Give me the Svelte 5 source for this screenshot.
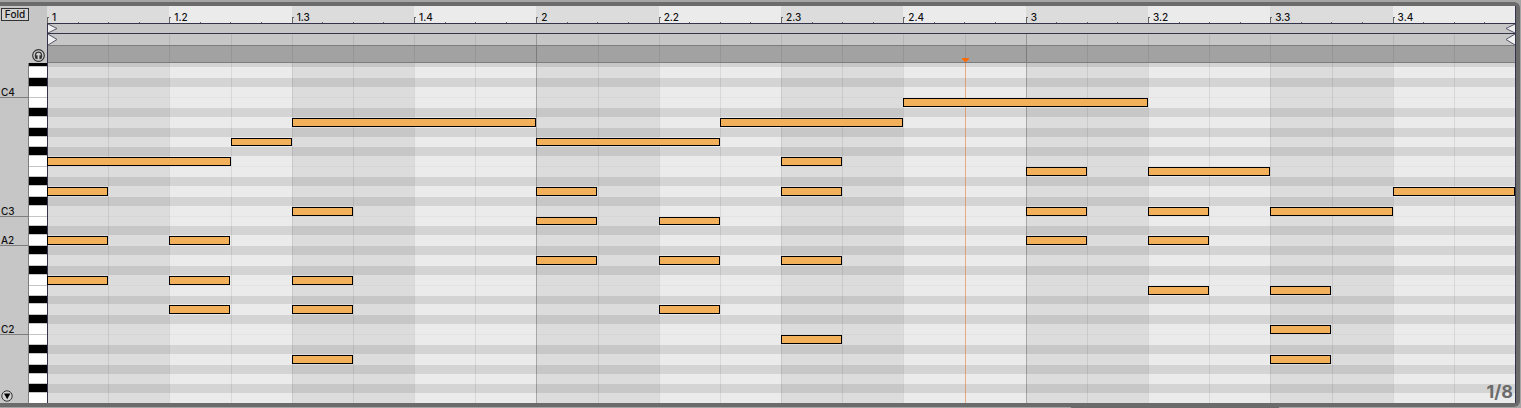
<script>
  const TOP_PITCH = 75; // D#4, only partly in view
  const BOTTOM_PITCH = 41; // F1
  const ROW = 9.875;
  const FIRST_ROW = 4.4;
  const BEATS = 12;

  let fold = $state(false);
  let preview = $state(false);
  let playhead = 7.5;

  const blackKeys = [1, 3, 6, 8, 10];
  const keyLabels = { 72: "C4", 60: "C3", 57: "A2", 48: "C2" };

  // start and length in beats
  const notes = [
    { pitch: 71, start: 7, length: 2 },
    { pitch: 69, start: 2, length: 2 },
    { pitch: 69, start: 5.5, length: 1.5 },
    { pitch: 67, start: 1.5, length: 0.5 },
    { pitch: 67, start: 4, length: 1.5 },
    { pitch: 65, start: 0, length: 1.5 },
    { pitch: 65, start: 6, length: 0.5 },
    { pitch: 64, start: 8, length: 0.5 },
    { pitch: 64, start: 9, length: 1 },
    { pitch: 62, start: 0, length: 0.5 },
    { pitch: 62, start: 4, length: 0.5 },
    { pitch: 62, start: 6, length: 0.5 },
    { pitch: 62, start: 11, length: 1 },
    { pitch: 60, start: 2, length: 0.5 },
    { pitch: 60, start: 8, length: 0.5 },
    { pitch: 60, start: 9, length: 0.5 },
    { pitch: 60, start: 10, length: 1 },
    { pitch: 59, start: 4, length: 0.5 },
    { pitch: 59, start: 5, length: 0.5 },
    { pitch: 57, start: 0, length: 0.5 },
    { pitch: 57, start: 1, length: 0.5 },
    { pitch: 57, start: 8, length: 0.5 },
    { pitch: 57, start: 9, length: 0.5 },
    { pitch: 55, start: 4, length: 0.5 },
    { pitch: 55, start: 5, length: 0.5 },
    { pitch: 55, start: 6, length: 0.5 },
    { pitch: 53, start: 0, length: 0.5 },
    { pitch: 53, start: 1, length: 0.5 },
    { pitch: 53, start: 2, length: 0.5 },
    { pitch: 52, start: 9, length: 0.5 },
    { pitch: 52, start: 10, length: 0.5 },
    { pitch: 50, start: 1, length: 0.5 },
    { pitch: 50, start: 2, length: 0.5 },
    { pitch: 50, start: 5, length: 0.5 },
    { pitch: 48, start: 10, length: 0.5 },
    { pitch: 47, start: 6, length: 0.5 },
    { pitch: 45, start: 2, length: 0.5 },
    { pitch: 45, start: 10, length: 0.5 }
  ];

  function rowTop(pitch) {
    return Math.max(0, Math.round(FIRST_ROW + (TOP_PITCH - 1 - pitch) * ROW));
  }

  function rowHeight(pitch) {
    return rowTop(pitch - 1) - rowTop(pitch);
  }

  const rows = [];
  for (let pitch = TOP_PITCH; pitch >= BOTTOM_PITCH; pitch--) {
    rows.push({
      pitch,
      black: blackKeys.includes(pitch % 12),
      afterWhite: pitch < TOP_PITCH && !blackKeys.includes((pitch + 1) % 12),
      height: rowHeight(pitch)
    });
  }

  const beats = Array.from({ length: BEATS }, (_, i) => {
    const bar = Math.floor(i / 4) + 1;
    const beat = (i % 4) + 1;
    return { index: i, label: beat === 1 ? `${bar}` : `${bar}.${beat}` };
  });

  const percent = (n) => `${(n / BEATS) * 100}%`;
</script>

{#snippet gridLines()}
  <div class="lines">
    {#each beats as beat}
      <div class="half" class:bar={beat.index % 4 === 0}></div>
      <div class="half"></div>
    {/each}
  </div>
{/snippet}

<main class="editor">
  <aside class="sidebar">
    <div class="tools">
      <button class="fold" aria-pressed={fold} onclick={() => (fold = !fold)}>Fold</button>
      <button class="round" aria-label="Preview notes" aria-pressed={preview} onclick={() => (preview = !preview)}>
        <svg width="13" height="13" viewBox="0 0 13 13">
          <circle cx="6.5" cy="6.5" r="5.8" fill="#d2d2d2" stroke="#333" stroke-width="1.2" />
          <path d="M4.4 9.6C2.7 8 2.8 3.1 6.5 3.1S10.3 8 8.6 9.6" fill="none" stroke="#333" stroke-width="1.3" />
          <path d="M3.6 6.2h2v4H4.6L3.2 9zM9.4 6.2h-2v4h1L9.8 9z" fill="#333" />
        </svg>
      </button>
    </div>
    <div class="keyboard">
      <div class="names">
        {#each rows as row}
          <div class="name" style:height="{row.height}px">
            {#if keyLabels[row.pitch]}<span>{keyLabels[row.pitch]}</span>{/if}
          </div>
        {/each}
      </div>
      <div class="keys">
        {#each rows as row}
          <div class="key" class:black={row.black} class:split={row.afterWhite && !row.black} style:height="{row.height}px"></div>
        {/each}
      </div>
      <button class="round expand" aria-label="Show expression editor">
        <svg width="12" height="12" viewBox="0 0 12 12">
          <circle cx="6" cy="6" r="5.2" fill="#d2d2d2" stroke="#333" />
          <path d="M3 3.6h6.4L6.2 9.2z" fill="#000" />
        </svg>
      </button>
    </div>
  </aside>

  <section class="timeline">
    <div class="ruler">
      {#each beats as beat}
        <div class="beat">
          <i class="tick"></i>
          <span>{beat.label}</span>
          <div class="quarters"><i></i><i></i><i></i><i></i></div>
        </div>
      {/each}
    </div>
    <div class="lane loop">
      <svg class="start" width="10" height="9" viewBox="0 0 10 9"><path d="M0 0L9 4.5L0 9" /></svg>
      <svg class="end" width="10" height="9" viewBox="0 0 10 9"><path d="M10 0L1 4.5L10 9" /></svg>
    </div>
    <div class="lane markers">
      {@render gridLines()}
      <svg class="start" width="10" height="11" viewBox="0 0 10 11"><path d="M0 0L9 5.5L0 11" /></svg>
      <svg class="end" width="10" height="11" viewBox="0 0 10 11"><path d="M10 0L1 5.5L10 11" /></svg>
    </div>
    <div class="lane scrub">
      {@render gridLines()}
      <svg class="playhead" width="9" height="4" viewBox="0 0 9 4" style:left={percent(playhead)}>
        <path d="M1 0h7v1L5 4H4L1 1z" fill="#ff6a00" />
      </svg>
    </div>
    <div class="grid">
      <div class="shades">
        {#each beats as beat}<div class="beat"></div>{/each}
      </div>
      <div class="rows">
        {#each rows as row}
          <div class="row" class:black={row.black} class:split={row.afterWhite && !row.black} style:height="{row.height}px"></div>
        {/each}
      </div>
      {@render gridLines()}
      <div class="cursor" style:left={percent(playhead)}></div>
      {#each notes as note}
        <div
          class="note"
          style:left={percent(note.start)}
          style:width={percent(note.length)}
          style:top="{rowTop(note.pitch) + 1}px"
          style:height="{rowHeight(note.pitch) - 1}px"
        ></div>
      {/each}
      <div class="resolution">1/8</div>
    </div>
  </section>
</main>
<div class="scroller"><div class="thumb"></div></div>

<style>
  :global(body) {
    background: #a5a5a5;
  }

  .editor {
    display: flex;
    margin: 2px 1px 0 0;
    border: 4px solid #6b6b6b;
    border-left: none;
    border-top-right-radius: 6px;
    border-bottom-right-radius: 6px;
    font-family: Inter, "Noto Sans", sans-serif;
    font-size: 10px;
    font-weight: 500;
    line-height: 12px;
    color: #111;
  }

  button {
    padding: 0;
    font: inherit;
    color: inherit;
    cursor: pointer;
  }

  /* Sidebar */
  .sidebar {
    width: 47px;
    flex: none;
    background: #c6c6c6;
  }
  .tools {
    display: flex;
    flex-direction: column;
    align-items: flex-start;
    justify-content: space-between;
    height: 57px;
    box-sizing: border-box;
    padding: 2px 2px 1px 1px;
  }
  .fold {
    width: 28px;
    height: 13px;
    border: 1px solid #333;
    background: #d2d2d2;
    line-height: 11px;
  }
  .round {
    display: block;
    border: none;
    background: none;
    line-height: 0;
  }
  .tools .round {
    align-self: flex-end;
  }
  .keyboard {
    display: flex;
    position: relative;
  }
  .names {
    flex: 1;
  }
  .name {
    display: flex;
    align-items: flex-end;
  }
  .name span {
    flex: 1;
    padding-left: 1px;
    margin-bottom: -1px;
    border-bottom: 1px solid #7d7d7d;
    line-height: 10px;
  }
  .keys {
    width: 18px;
    border-left: 1px solid #7d7d7d;
    background: #fff;
  }
  .key {
    box-sizing: border-box;
  }
  .key.black {
    background: #000;
    border-top: 1px solid #c6c6c6;
    border-bottom: 1px solid #c6c6c6;
  }
  .key.black:first-child {
    border-top: none;
  }
  .key.split {
    border-top: 1px solid #c6c6c6;
  }
  .expand {
    position: absolute;
    left: 1px;
    bottom: 1px;
  }

  /* Timeline */
  .timeline {
    flex: 1;
    position: relative;
    border-right: 1px solid #33334a;
  }
  .timeline::before {
    content: "";
    position: absolute;
    z-index: 1;
    top: 17px;
    bottom: 0;
    left: 0;
    width: 1px;
    background: #33334a;
  }
  .ruler {
    display: flex;
    height: 17px;
    border-bottom: 1px solid #33334a;
  }
  .beat {
    flex: 1;
    background: #dcdcdc;
  }
  .beat:nth-child(even) {
    background: #ebebeb;
  }
  .ruler .beat {
    position: relative;
  }
  .ruler span {
    display: block;
    padding: 5px 0 0 5px;
  }
  .tick {
    position: absolute;
    left: 0;
    bottom: 0;
    width: 1px;
    height: 5px;
    border: solid #666;
    border-width: 1px 0 0 1px;
  }
  .quarters {
    position: absolute;
    inset: auto 0 0 0;
    display: flex;
  }
  .quarters i {
    flex: 1;
    height: 1px;
    border-left: 1px solid #666;
  }
  .lane {
    position: relative;
    background: #c6c6c6;
  }
  .loop {
    height: 9px;
    border-bottom: 1px solid #33334a;
  }
  .markers {
    height: 11px;
    border-bottom: 1px solid #7d7d7d;
  }
  .scrub {
    height: 16px;
    background: #a2a2a2;
    border-bottom: 1px solid #7d7d7d;
  }
  .lane svg {
    position: absolute;
    top: 0;
  }
  .lane .start {
    left: 1px;
  }
  .lane .end {
    right: 0;
  }
  .start path,
  .end path {
    fill: #f0f0f0;
    stroke: #55556a;
  }
  .lane .playhead {
    top: auto;
    bottom: 0;
    margin-left: -4px;
  }

  /* Note grid */
  .grid {
    position: relative;
  }
  .shades,
  .lines {
    position: absolute;
    inset: 0;
    display: flex;
  }
  .half {
    flex: 1;
    border-left: 1px solid rgba(0, 0, 0, 0.08);
  }
  .half.bar {
    border-left-color: rgba(0, 0, 0, 0.24);
  }
  .rows {
    position: relative;
  }
  .row {
    box-sizing: border-box;
  }
  .row.black {
    background: rgba(0, 0, 0, 0.094) content-box;
    padding-top: 1px;
  }
  .row.black:first-child {
    padding-top: 0;
  }
  .row.split {
    border-top: 1px solid rgba(0, 0, 0, 0.03);
  }
  .cursor {
    position: absolute;
    top: 0;
    bottom: 0;
    width: 1px;
    background: rgba(255, 106, 0, 0.4);
  }
  .note {
    position: absolute;
    z-index: 2;
    box-sizing: border-box;
    border: 1px solid #000;
    background: #f2b05b;
  }
  .resolution {
    position: absolute;
    right: 2px;
    bottom: 1px;
    font-size: 18px;
    line-height: 20px;
    font-weight: 700;
    color: #6b6b6b;
  }

  .scroller {
    height: 1px;
  }
  .thumb {
    width: 13.7%;
    height: 1px;
    margin-left: 70.4%;
    background: #6b6b6b;
  }
</style>
